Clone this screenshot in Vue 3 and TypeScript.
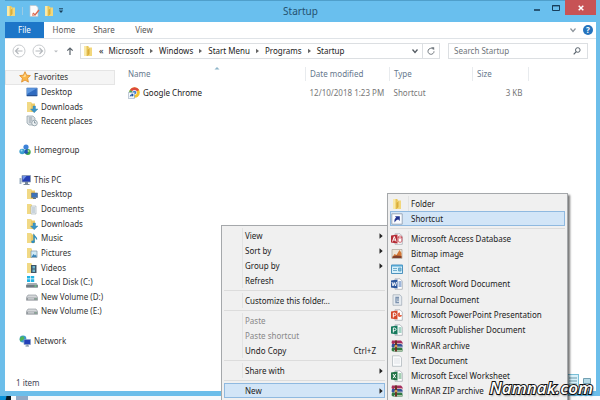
<script setup lang="ts">
import { ref } from 'vue'

interface NavItem { label: string; icon: string; row: number; child?: boolean; selected?: boolean }
interface MenuItem { label: string; icon?: string; arrow?: boolean; keys?: string; disabled?: boolean; active?: boolean }

const tabs = ['Home', 'Share', 'View']
const crumbs = ['Microsoft', 'Windows', 'Start Menu', 'Programs', 'Startup']
const search = ref('')

const nav: NavItem[] = [
  { label: 'Favorites', icon: 'star', row: 1, selected: true },
  { label: 'Desktop', icon: 'screen', row: 2, child: true },
  { label: 'Downloads', icon: 'downloads', row: 3, child: true },
  { label: 'Recent places', icon: 'recent', row: 4, child: true },
  { label: 'Homegroup', icon: 'homegroup', row: 6 },
  { label: 'This PC', icon: 'pc', row: 8 },
  { label: 'Desktop', icon: 'desktop', row: 9, child: true },
  { label: 'Documents', icon: 'documents', row: 10, child: true },
  { label: 'Downloads', icon: 'downloads', row: 11, child: true },
  { label: 'Music', icon: 'music', row: 12, child: true },
  { label: 'Pictures', icon: 'pictures', row: 13, child: true },
  { label: 'Videos', icon: 'videos', row: 14, child: true },
  { label: 'Local Disk (C:)', icon: 'disk', row: 15, child: true },
  { label: 'New Volume (D:)', icon: 'drive', row: 16, child: true },
  { label: 'New Volume (E:)', icon: 'drive', row: 17, child: true },
  { label: 'Network', icon: 'network', row: 19 },
]

const contextGroups: MenuItem[][] = [
  [
    { label: 'View', arrow: true },
    { label: 'Sort by', arrow: true },
    { label: 'Group by', arrow: true },
    { label: 'Refresh' },
  ],
  [{ label: 'Customize this folder...' }],
  [
    { label: 'Paste', disabled: true },
    { label: 'Paste shortcut', disabled: true },
    { label: 'Undo Copy', keys: 'Ctrl+Z' },
  ],
  [{ label: 'Share with', arrow: true }],
  [{ label: 'New', arrow: true, active: true }],
]

const newGroups: MenuItem[][] = [
  [
    { label: 'Folder', icon: 'folder' },
    { label: 'Shortcut', icon: 'shortcut', active: true },
  ],
  [
    { label: 'Microsoft Access Database', icon: 'access' },
    { label: 'Bitmap image', icon: 'bitmap' },
    { label: 'Contact', icon: 'contact' },
    { label: 'Microsoft Word Document', icon: 'word' },
    { label: 'Journal Document', icon: 'journal' },
    { label: 'Microsoft PowerPoint Presentation', icon: 'powerpoint' },
    { label: 'Microsoft Publisher Document', icon: 'publisher' },
    { label: 'WinRAR archive', icon: 'winrar' },
    { label: 'Text Document', icon: 'text' },
    { label: 'Microsoft Excel Worksheet', icon: 'excel' },
    { label: 'WinRAR ZIP archive', icon: 'winrar' },
  ],
]
</script>

<template>
  <svg class="sprite" aria-hidden="true">
    <symbol id="folder" viewBox="0 0 12 12">
      <path d="M2 1h4l1 1v9H2z" fill="#e9c65b" /><path d="M6 2.500h4V11H6z" fill="#f2d77c" />
      <path d="M2 1h2.500v10H2z" fill="#f9e9a8" /><path d="M5.500 5v6l2-2V3z" fill="#d9ad3c" />
    </symbol>
    <symbol id="properties" viewBox="0 0 12 12">
      <path d="M2 .5h6l2 2v9H2z" fill="#fbfbfb" stroke="#b9c3cc" stroke-width=".7" />
      <path d="M5 8l2 2 4-5" fill="none" stroke="#d9674f" stroke-width="1.400" /><path d="M4 8l3 3H4z" fill="#eba592" />
    </symbol>
    <symbol id="star" viewBox="0 0 12 12">
      <path d="M6 .7l1.600 3.500 3.800.4-2.800 2.600.8 3.900L6 9.100l-3.400 2 .8-3.900L.6 4.600l3.800-.4z" fill="#f9b64a" stroke="#e08b24" stroke-width=".8" />
      <path d="M6 2.500l1 2.500-1 1-3-.8 2-.3z" fill="#ffe2a0" />
    </symbol>
    <symbol id="screen" viewBox="0 0 12 12">
      <path d="M.8 2h10.400v8H.8z" fill="#2f6bc0" stroke="#6e93c4" stroke-width=".8" />
      <path d="M1 2.200h10L1 8z" fill="#5d97df" /><path d="M1 9h10v1H1z" fill="#244f91" />
    </symbol>
    <symbol id="downloads" viewBox="0 0 12 12">
      <path d="M1 1h4l1 1v9H1z" fill="#f1d985" /><path d="M5 2.500h4V11H5z" fill="#ecca68" />
      <path d="M7 5h2.500v3H12l-3.800 3.800L4.500 8H7z" fill="#3a94c6" stroke="#3b83aa" stroke-width=".4" />
    </symbol>
    <symbol id="recent" viewBox="0 0 12 12">
      <path d="M1 1h6l2 2v7H3L1 8z" fill="#d7dde1" stroke="#9ba8b0" stroke-width=".8" />
      <path d="M3 3h3M3 5h3M3 7h2" stroke="#8696a0" stroke-width=".8" /><circle cx="8.500" cy="8" r="2.800" fill="#eef2f4" stroke="#87979f" stroke-width=".8" />
      <path d="M8.500 6.200V8H10" fill="none" stroke="#5f7482" stroke-width=".7" />
    </symbol>
    <symbol id="homegroup" viewBox="0 0 12 12">
      <circle cx="7" cy="3" r="2.600" fill="#3d82d8" /><circle cx="3.200" cy="7.500" r="2.800" fill="#3b9fd0" />
      <circle cx="8.800" cy="8" r="2.900" fill="#3ea44b" /><path d="M6 6l2-1 2 2-2 3-3-1z" fill="#2155b3" />
      <circle cx="2.600" cy="6.600" r="1" fill="#a5dcf2" /><circle cx="9.500" cy="7" r="1" fill="#a8e095" />
    </symbol>
    <symbol id="pc" viewBox="0 0 12 12">
      <path d="M3 1.500h8.500V8H3z" fill="#253fb4" stroke="#8d9db0" stroke-width=".8" /><path d="M3.500 2h4L4 6z" fill="#7195e8" />
      <path d="M6 8h3v2H6zM4.500 10h6v1h-6z" fill="#79899a" /><path d="M.5 4h2v6h-2z" fill="#9fb2c5" />
    </symbol>
    <symbol id="desktop" viewBox="0 0 12 12">
      <path d="M1 1h4l1 1v9H1z" fill="#f1d985" /><path d="M5 2.500h4V11H5z" fill="#ecca68" />
      <path d="M5.500 5h6v4.500h-6z" fill="#3b72bb" stroke="#51637a" stroke-width=".6" /><path d="M7 10.500h3" stroke="#5c7188" />
    </symbol>
    <symbol id="documents" viewBox="0 0 12 12">
      <path d="M1 1h4l1 1v9H1z" fill="#f1d985" /><path d="M5 3h5v8H5z" fill="#f3f6f8" stroke="#9fabb4" stroke-width=".6" /><path d="M6 5h3M6 7h3M6 9h3" stroke="#7c95ab" stroke-width=".7" />
    </symbol>
    <symbol id="music" viewBox="0 0 12 12">
      <path d="M1 1h4l1 1v9H1z" fill="#f1d985" /><path d="M5 2.500h4V11H5z" fill="#ecca68" />
      <path d="M8 10V3.500c1 1.500 3 2 2.500 4" fill="none" stroke="#2e8dc1" stroke-width="1.400" /><ellipse cx="7" cy="9.800" rx="1.800" ry="1.400" fill="#2e8dc1" />
    </symbol>
    <symbol id="pictures" viewBox="0 0 12 12">
      <path d="M1 1h4l1 1v9H1z" fill="#f1d985" /><path d="M5 4h6v6.500H5z" fill="#cfeaf7" stroke="#7e97a8" stroke-width=".7" /><path d="M5.500 10l2-3L9 8.500l1-1 .7 2.500z" fill="#3a83b7" />
    </symbol>
    <symbol id="videos" viewBox="0 0 12 12">
      <path d="M1 1h4l1 1v9H1z" fill="#f1d985" /><path d="M5 3h5.500v8H5z" fill="#405668" /><path d="M6.500 4H9v2.500H6.500zM6.500 7.500H9V10H6.500z" fill="#6fb7cf" />
    </symbol>
    <symbol id="disk" viewBox="0 0 12 12">
      <path d="M1 0h3v2.600H1zM4.700 0h3.500v2.600H4.700zM1 3.300h3V6H1zM4.700 3.300h3.500V6H4.700z" fill="#20b3e4" />
      <path d="M1.500 7h9l1.300 2v2.500H.2V9z" fill="#a5adb3" /><path d="M.2 9h11.600v2.500H.2z" fill="#707b83" /><path d="M8.500 10h2" stroke="#6ef08a" />
    </symbol>
    <symbol id="drive" viewBox="0 0 12 12">
      <path d="M2 4h8l1.700 2.500v2.700H.3V6.500z" fill="#d5d8da" stroke="#888f94" stroke-width=".6" /><path d="M.5 6.600h11v2.600H.5z" fill="#949a9f" />
      <path d="M2 7.900h6" stroke="#e4e7e9" /><path d="M9 7.900h1.500" stroke="#7cb58a" />
    </symbol>
    <symbol id="network" viewBox="0 0 12 12">
      <circle cx="4" cy="4" r="3.400" fill="#3a9ccb" /><path d="M2 2c2-2 4 0 3 2S2 5 2 7C0 5 .5 3 2 2z" fill="#4fb556" />
      <path d="M5 4.500h6.500v5H5z" fill="#2341b8" stroke="#8ba1c5" stroke-width=".7" /><path d="M8.200 9.500v1.300M6.500 11h3.500" stroke="#6b7d95" />
    </symbol>
    <symbol id="chrome" viewBox="0 0 12 12">
      <circle cx="6.500" cy="5.500" r="5.300" fill="#f4c430" /><path d="M6.500 5.500L1.900 2.900a5.300 5.300 0 0 1 9.300 0z" fill="#dc4a3d" />
      <path d="M6.500 5.500L1.900 2.900a5.300 5.300 0 0 0 4.600 7.900z" fill="#44a858" /><circle cx="6.500" cy="5.500" r="2.400" fill="#fff" /><circle cx="6.500" cy="5.500" r="1.800" fill="#3f7fd8" />
      <path d="M.4 5.400h6v6.200h-6z" fill="#f5f8fb" stroke="#8ea3b7" stroke-width=".6" /><path d="M1.800 10.300c0-2 .8-3 2-3V6l2 2-2 2V8.800c-1 0-1.500.5-2 1.500z" fill="#1f55a5" />
    </symbol>
    <symbol id="shortcut" viewBox="0 0 12 12">
      <path d="M.8.8h10.400v10.400H.8z" fill="#fafcff" stroke="#9aa7ba" /><path d="M3.500 9.500c-.3-3 .3-4.300 1.700-4.500L4 3.200h4.800V8L7.300 6.600C5.800 6.700 5 7.800 3.500 9.500z" fill="#20338f" />
    </symbol>
    <symbol id="sheet" viewBox="0 0 12 12"><path d="M4 .8h5l2.300 2.300v8.200H4z" fill="#fff" stroke="#9da5ad" stroke-width=".7" /></symbol>
    <symbol id="access" viewBox="0 0 12 12">
      <use href="#sheet" /><ellipse cx="9" cy="4" rx="1.900" ry="1" fill="none" stroke="#c33b46" stroke-width=".8" /><path d="M7.100 4v4.500c1 1 3 1 3.800 0V4" fill="none" stroke="#c33b46" stroke-width=".8" />
      <path d="M0 2.500L6.500 1.500v9L0 9.500z" fill="#b52b35" /><path d="M1.500 8.500L3.300 3.500l1.800 5M2.300 7h2" fill="none" stroke="#fff" />
    </symbol>
    <symbol id="bitmap" viewBox="0 0 12 12">
      <path d="M1 1.500h10v9H1z" fill="#eee5d7" stroke="#aaa49a" stroke-width=".7" /><path d="M1.500 9l2-3 2 1 3-5 2 3v5h-9z" fill="#d37735" /><path d="M1.500 8.500l4-1 5 .5v2h-9z" fill="#813f2b" />
    </symbol>
    <symbol id="contact" viewBox="0 0 12 12">
      <path d="M.5 2h11v8.500H.5z" fill="#d6f0fb" stroke="#3c87b8" stroke-width=".9" /><path d="M.5 2h11v1.500H.5z" fill="#53a5d2" /><path d="M2 5.500h4M2 7.500h4M7.500 5h2.500v3H7.500z" stroke="#579dc2" fill="#79bddf" stroke-width=".8" />
    </symbol>
    <symbol id="word" viewBox="0 0 12 12">
      <use href="#sheet" /><path d="M7.500 4h3M7.500 6h3M7.500 8h3" stroke="#3f6fb5" /><path d="M0 2.500L6.500 1.500v9L0 9.500z" fill="#2b569c" /><path d="M1 4l1 4L3.200 4.500 4.500 8l1-4" fill="none" stroke="#fff" stroke-width=".9" />
    </symbol>
    <symbol id="journal" viewBox="0 0 12 12">
      <path d="M2 .8h7l1.700 2v8.500H2z" fill="#e6ebf0" stroke="#9ea9b4" stroke-width=".7" /><path d="M8 3.500H5v5h3M7 3v4" fill="none" stroke="#7b91ae" stroke-width="1.300" />
    </symbol>
    <symbol id="powerpoint" viewBox="0 0 12 12">
      <use href="#sheet" /><path d="M9 3.500v2.500h2A2.200 2.200 0 1 1 9 3.500z" fill="#e4674a" /><path d="M0 2.500L6.500 1.500v9L0 9.500z" fill="#d5472a" /><path d="M2.300 8.500V4h1.300c1.900 0 1.900 2.700 0 2.700H2.300" fill="none" stroke="#fff" />
    </symbol>
    <symbol id="publisher" viewBox="0 0 12 12">
      <use href="#sheet" /><path d="M7.500 4h3M7.500 6h3M7.500 8h3" stroke="#4eaa8d" /><path d="M0 2.500L6.500 1.500v9L0 9.500z" fill="#14795c" /><path d="M2.300 8.500V4h1.300c1.900 0 1.900 2.700 0 2.700H2.300" fill="none" stroke="#fff" />
    </symbol>
    <symbol id="excel" viewBox="0 0 12 12">
      <use href="#sheet" /><path d="M7.500 4h3M7.500 6h3M7.500 8h3" stroke="#4b9e69" /><path d="M0 2.500L6.500 1.500v9L0 9.500z" fill="#217346" /><path d="M2 4l2.700 4.200M4.700 4L2 8.200" stroke="#fff" />
    </symbol>
    <symbol id="winrar" viewBox="0 0 12 12">
      <path d="M1 .5h9l1.500 1.700v2H1.800L.5 3z" fill="#a72d5c" /><path d="M1 4h9l1.500 1v2.500H1.800L.5 6.500z" fill="#34509a" /><path d="M1 7.500h9l1.500 1v3H1.800L.5 10.200z" fill="#2f7a42" />
      <path d="M3 3.500h8M3 7h8M3 10.500h8" stroke="#e4dfd0" stroke-width=".7" /><path d="M4 .5h2v11H4z" fill="#6b3326" /><path d="M3.700 5h2.600v2.200H3.700z" fill="#cf9f48" />
    </symbol>
    <symbol id="text" viewBox="0 0 12 12">
      <path d="M1.500.8h7l2 2v8.500h-9z" fill="#fafbfc" stroke="#a9b1b8" stroke-width=".7" /><path d="M3 4h6M3 6h6M3 8h6" stroke="#d3d9de" stroke-width=".7" />
    </symbol>
  </svg>

  <div class="screen">
    <main class="window">
      <header class="titlebar">
        <div class="quick">
          <svg class="icon"><use href="#folder" /></svg>
          <i class="divider"></i>
          <button type="button" aria-label="Properties"><svg class="icon"><use href="#properties" /></svg></button>
          <button type="button" aria-label="New folder"><svg class="icon"><use href="#folder" /></svg></button>
          <button type="button" aria-label="Customize toolbar">
            <svg class="tiny" viewBox="0 0 6 6"><path d="M1 .8h4" stroke="#173d59" /><path d="M.8 2.500h4.400L3 5z" fill="#173d59" /></svg>
          </button>
        </div>
        <h1>Startup</h1>
        <div class="controls">
          <button type="button" aria-label="Minimize"><svg viewBox="0 0 10 10"><path d="M2 7h6" stroke="#173e5b" stroke-width="1.600" /></svg></button>
          <button type="button" aria-label="Maximize"><svg viewBox="0 0 10 10"><path d="M1.500 2.500h7v5h-7z" fill="none" stroke="#173e5b" /><path d="M1.500 2.700h7" stroke="#173e5b" stroke-width="1.400" /></svg></button>
          <button type="button" class="close" aria-label="Close"><svg viewBox="0 0 10 10"><path d="M2.700 2.700l4.600 4.600M7.300 2.700L2.700 7.300" stroke="#fff" stroke-width="1.500" /></svg></button>
        </div>
      </header>

      <nav class="ribbon" aria-label="Ribbon">
        <button type="button" class="file">File</button>
        <button v-for="tab in tabs" :key="tab" type="button" class="tab">{{ tab }}</button>
        <div class="help">
          <button type="button" aria-label="Expand ribbon"><svg class="small" viewBox="0 0 8 8"><path d="M1.500 2.500L4 5.500l2.500-3" fill="none" stroke="#8d949b" stroke-width="1.200" /></svg></button>
          <button type="button" class="question" aria-label="Help">?</button>
        </div>
      </nav>

      <div class="address-row">
        <div class="history">
          <button type="button" aria-label="Back"><svg class="round" viewBox="0 0 14 14"><circle cx="7" cy="7" r="6" fill="#fff" stroke="#c9cccf" /><path d="M10.500 7h-7M6.500 4L3.500 7l3 3" fill="none" stroke="#b5b9bd" stroke-width="1.200" /></svg></button>
          <button type="button" aria-label="Forward"><svg class="round" viewBox="0 0 14 14"><circle cx="7" cy="7" r="6" fill="#fff" stroke="#c9cccf" /><path d="M3.500 7h7M7.500 4l3 3-3 3" fill="none" stroke="#b5b9bd" stroke-width="1.200" /></svg></button>
          <button type="button" aria-label="Recent locations"><svg class="small" viewBox="0 0 8 8"><path d="M2 3.500h4L4 5.500z" fill="#b9bcc0" /></svg></button>
          <button type="button" aria-label="Up"><svg class="small" viewBox="0 0 8 8"><path d="M4 8V1M1.300 3.700L4 1l2.700 2.700" fill="none" stroke="#5b646c" stroke-width="1.200" /></svg></button>
        </div>
        <div class="address">
          <svg class="icon"><use href="#folder" /></svg>
          <span class="chevrons">«</span>
          <template v-for="(crumb, index) in crumbs" :key="crumb">
            <svg v-if="index" class="crumb-arrow" viewBox="0 0 5 6"><path d="M1 .8L4 3 1 5.200z" fill="#666" /></svg>
            <a href="#">{{ crumb }}</a>
          </template>
          <div class="address-tools">
            <button type="button" aria-label="Previous locations"><svg class="small" viewBox="0 0 8 8"><path d="M1.500 2.500L4 5.500l2.500-3" fill="none" stroke="#555c63" stroke-width="1.300" /></svg></button>
            <button type="button" class="refresh" aria-label="Refresh"><svg class="small" viewBox="0 0 8 8"><path d="M5.800 1.900A3 3 0 1 0 7 4.300" fill="none" stroke="#6e757b" /><path d="M4 .2h3.200v3z" fill="#6e757b" /></svg></button>
          </div>
        </div>
        <label class="search">
          <input v-model="search" type="search" placeholder="Search Startup" aria-label="Search Startup" />
          <svg class="small" viewBox="0 0 8 8"><circle cx="4.800" cy="3" r="2.300" fill="none" stroke="#59636c" /><path d="M3.200 4.700L.7 7.400" stroke="#59636c" stroke-width="1.200" /></svg>
        </label>
      </div>

      <div class="body">
        <nav class="sidebar" aria-label="Folders">
          <a v-for="item in nav" :key="item.row" href="#" :class="['nav-item', { child: item.child, selected: item.selected }]" :style="{ gridRow: item.row }">
            <svg class="icon"><use :href="'#' + item.icon" /></svg>{{ item.label }}
          </a>
        </nav>
        <div class="files">
          <table>
            <thead>
              <tr>
                <th class="name">Name<svg class="sort" viewBox="0 0 6 4"><path d="M.5 3.500L3 1l2.500 2.500z" fill="#8eb5ca" /></svg></th>
                <th class="date">Date modified</th>
                <th class="type">Type</th>
                <th class="size">Size</th>
                <th class="rest"></th>
              </tr>
            </thead>
            <tbody>
              <tr>
                <td class="name"><span class="file-name"><svg class="icon"><use href="#chrome" /></svg>Google Chrome</span></td>
                <td>12/10/2018 1:23 PM</td>
                <td>Shortcut</td>
                <td class="amount">3 KB</td>
                <td></td>
              </tr>
            </tbody>
          </table>
        </div>
      </div>

      <footer class="status">
        <span>1 item</span>
        <div class="views">
          <button type="button" class="current" aria-label="Details view"><svg class="small" viewBox="0 0 8 8"><path d="M0 1h8M0 4h8M0 7h8" stroke="#6b98aa" /></svg></button>
          <button type="button" aria-label="Large icons view"><svg class="small" viewBox="0 0 8 8"><path d="M.5 1.500h7v5h-7z" fill="#b5dbe8" stroke="#73a0b2" /></svg></button>
        </div>
      </footer>
    </main>
    <div class="taskbar"><i class="start"></i><i class="app"></i></div>

    <div class="menu context" role="menu" aria-label="Folder menu">
      <div v-for="(group, g) in contextGroups" :key="g" class="group">
        <button v-for="item in group" :key="item.label" type="button" role="menuitem" :disabled="item.disabled" :class="['item', { active: item.active }]">
          <span class="slot"></span>
          <span>{{ item.label }}</span>
          <span v-if="item.keys" class="keys">{{ item.keys }}</span>
          <svg v-if="item.arrow" class="arrow" viewBox="0 0 4 6"><path d="M.5.3L3.700 3 .5 5.700z" fill="#222" /></svg>
        </button>
      </div>
    </div>

    <div class="menu submenu" role="menu" aria-label="New">
      <div v-for="(group, g) in newGroups" :key="g" class="group">
        <button v-for="item in group" :key="item.label" type="button" role="menuitem" :class="['item', { active: item.active }]">
          <span class="slot"><svg class="icon"><use :href="'#' + item.icon" /></svg></span>
          <span>{{ item.label }}</span>
        </button>
      </div>
    </div>

    <div class="watermark">Namnak.com</div>
  </div>
</template>

<style>
body { margin: 0; overflow: hidden; }
</style>

<style scoped>
.sprite { position: absolute; width: 0; height: 0; }
.screen {
  position: relative; display: flex; flex-direction: column; height: 100vh; overflow: hidden;
  background: #fff; color: #222; font: 8px/12px "Noto Sans", "Open Sans", sans-serif;
}
button { display: flex; align-items: center; justify-content: center; border: 0; padding: 0; margin: 0; background: none; color: inherit; font: inherit; }
a { color: inherit; text-decoration: none; }
svg { flex: none; display: block; }
.icon { width: 12px; height: 12px; }
.small { width: 8px; height: 8px; }
.tiny { width: 6px; height: 6px; }

.window { flex: 1; min-height: 0; display: flex; flex-direction: column; box-sizing: border-box; border: solid #6cbeea; border-width: 0 4px 5px 5px; background: #fff; }
.titlebar { display: grid; grid-template-columns: 1fr auto 1fr; height: 22px; align-items: center; background: #69bfee; box-shadow: inset 0 1px #4f9fcb; }
.quick { display: flex; align-items: center; gap: 3px; }
.divider { width: 1px; height: 8px; margin: 0 2px; background: #9acbe4; }
h1 { margin: 0; font-size: 10px; line-height: 20px; font-weight: 400; color: #24516e; }
.controls { display: flex; align-self: start; justify-content: flex-end; }
.controls button { width: 19px; height: 15px; }
.controls svg { width: 10px; height: 10px; }
.controls .close { width: 31px; background: #c75355; }

.ribbon { display: flex; height: 16px; border-bottom: 1px solid #dfe3e7; color: #555; }
.file { width: 39px; background: #1d76c8; color: #fff; }
.tab { width: 40px; }
.help { display: flex; gap: 6px; align-items: center; margin-left: auto; padding-right: 3px; }
.question { width: 10px; height: 10px; border-radius: 50%; background: #2573bd; color: #fff; font-weight: 700; }

.address-row { display: flex; align-items: center; gap: 6px; padding: 4px 8px 4px 7px; }
.history { display: flex; align-items: center; gap: 6px; }
.round { width: 14px; height: 14px; }
.address { flex: 1; display: flex; align-items: center; gap: 5px; height: 14px; border: 1px solid #dcdfe2; padding-left: 1px; }
.chevrons { font-size: 9px; }
.crumb-arrow { width: 5px; height: 6px; }
.address-tools { display: flex; margin-left: auto; height: 14px; }
.address-tools button { width: 14px; }
.address-tools .refresh { width: 17px; border-left: 1px solid #dcdfe2; }
.search { display: flex; align-items: center; width: 127px; height: 14px; margin-left: 2px; border: 1px solid #dcdfe2; padding: 0 6px 0 5px; }
.search input { flex: 1; min-width: 0; border: 0; padding: 0; outline: 0; background: none; color: #666; font: inherit; appearance: none; }
.search input::placeholder { color: #70757a; opacity: 1; }

.body { flex: 1; min-height: 0; display: flex; padding-top: 4px; }
.sidebar { display: grid; grid-template-rows: repeat(19, 1fr); width: 110px; height: 278px; margin-top: 3px; color: #333; }
.nav-item { display: flex; align-items: center; gap: 3px; padding-left: 14px; white-space: nowrap; }
.child { padding-left: 21px; }
.selected { background: #f5f5f5; box-shadow: inset 0 0 0 1px #e5e5e5; }

.files { flex: 1; padding-left: 7px; }
table { width: 100%; table-layout: fixed; border-collapse: collapse; }
th, td { padding: 0 0 0 4px; text-align: left; font-weight: 400; color: #777; white-space: nowrap; }
th { position: relative; height: 14px; border-right: 1px solid #e8ebee; color: #66788d; }
th.rest { border: 0; }
td { height: 24px; }
td.name { color: #222; }
th.name { width: 177px; padding-left: 6px; }
th.date { width: 79px; }
th.type { width: 78px; }
th.size { width: 51px; }
td.name { padding-left: 6px; }
td.amount { padding-right: 6px; text-align: right; }
.file-name { display: flex; align-items: center; gap: 3px; }
.sort { position: absolute; top: -1px; left: 50%; width: 6px; height: 4px; }

.status { display: flex; align-items: center; justify-content: space-between; height: 16px; padding: 0 4px 0 11px; color: #445; }
.views { display: flex; gap: 3px; align-self: flex-start; }
.views button { width: 11px; height: 11px; }
.views .current { background: #d8f1fa; box-shadow: 0 0 0 1px #79bfd8; }
.taskbar { display: flex; gap: 5px; height: 4px; background: #f7fafc; }
.start { width: 11px; background: linear-gradient(100deg, #0a91d8 50%, #071a24 60%); }
.app { width: 12px; background: #91a9c5; }

.menu { position: absolute; box-sizing: border-box; border: 1px solid #a5a8ab; padding: 2px; background: #f0f0f0; box-shadow: 2px 2px 2px #0008; color: #222; }
.context { top: 225px; left: 221px; width: 167px; }
.submenu { top: 193px; left: 387px; width: 181px; }
.group + .group { margin-top: 2px; border-top: 1px solid #dcdcdc; padding-top: 2px; }
.item { position: relative; width: 100%; height: 15px; justify-content: flex-start; white-space: nowrap; }
.item:disabled { color: #888; }
.slot { display: flex; align-items: center; align-self: stretch; width: 17px; margin-right: 2px; border-right: 1px solid #e2e3e3; padding-left: 1px; }
.submenu .group:last-child { display: grid; grid-auto-rows: 1fr; height: 168px; }
.submenu .group:last-child .item { height: auto; }
.active { background: #d2e5f7; box-shadow: inset 0 0 0 1px #8fb9e0; }
.active .slot { border-color: transparent; }
.keys { margin-left: auto; margin-right: 9px; }
.arrow { width: 4px; height: 6px; margin-left: auto; margin-right: 2px; }

.watermark {
  position: absolute; right: 7px; bottom: 2px; color: #fff; font: italic 600 17px/20px "Open Sans", sans-serif;
  -webkit-text-stroke: 2px #111; paint-order: stroke fill; text-shadow: 1px 2px 2px #0006;
}
</style>
